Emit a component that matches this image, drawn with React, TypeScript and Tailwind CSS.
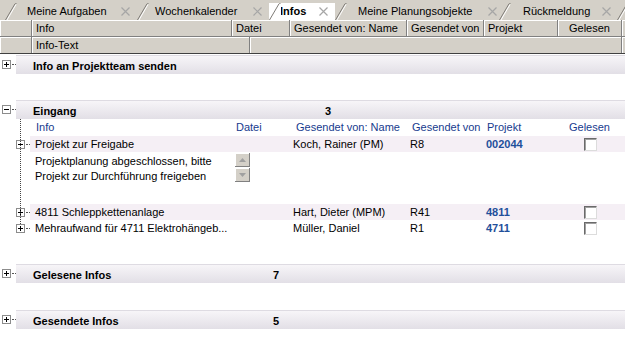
import React from "react";

function XIcon() {
  return (
    <svg width="9" height="9" viewBox="0 0 9 9" className="shrink-0">
      <path d="M0.5 0.5 L8.5 8.5 M8.5 0.5 L0.5 8.5" stroke="#a6a6a6" strokeWidth="1.2" fill="none" />
    </svg>
  );
}

function Diag({ active }: { active?: boolean }) {
  return (
    <svg width="12" height="17" viewBox="0 0 12 17" className="absolute left-0 top-0">
      {active && <polygon points="0.5,17 10.5,0 12,0 12,17" fill="#ffffff" />}
      <path d="M0.5 17 L10 0.8 Q10.6 0 11.5 0 L12 0" stroke="#7e7b76" strokeWidth="1" fill="none" />
      {!active && <path d="M2 17 L11 1.5" stroke="#ffffff" strokeWidth="1" fill="none" />}
    </svg>
  );
}

function Tab({
  w,
  pl,
  pr,
  label,
  active,
}: {
  w: string;
  pl: string;
  pr: string;
  label: string;
  active?: boolean;
}) {
  return (
    <div
      className={`relative flex h-[17px] shrink-0 items-center ${w} ${pl} ${pr} ${
        active ? "bg-white font-bold" : ""
      }`}
    >
      <Diag active={active} />
      <span className="flex-1 whitespace-nowrap leading-none">{label}</span>
      <XIcon />
    </div>
  );
}

function HCell({ w, children, center }: { w: string; children?: React.ReactNode; center?: boolean }) {
  return (
    <div
      className={`flex h-full shrink-0 items-center border-r border-r-[#808080] bg-[#d4d0c8] shadow-[inset_1px_1px_0_#ffffff] ${w} ${
        center ? "justify-center" : "pl-[4px]"
      } whitespace-nowrap`}
    >
      {children}
    </div>
  );
}

function Toggle({ open }: { open?: boolean }) {
  return (
    <div className="flex h-[9px] w-[9px] shrink-0 items-center justify-center border border-[#8c8c8c] bg-white">
      <svg width="7" height="7" viewBox="0 0 7 7">
        <path d="M1 3.5 H6" stroke="#000" strokeWidth="1" />
        {!open && <path d="M3.5 1 V6" stroke="#000" strokeWidth="1" />}
      </svg>
    </div>
  );
}

function Dots() {
  return <div className="ml-[1px] h-0 w-[6px] border-t border-dotted border-[#555]" />;
}

function Group({ title, count, open, countX }: { title: string; count?: string; open?: boolean; countX?: string }) {
  return (
    <div className="flex h-[19px] items-center">
      <div className="flex w-[16px] shrink-0 items-center pl-[2px]">
        <Toggle open={open} />
        <Dots />
      </div>
      <div className="flex h-full flex-1 items-center border-t border-[#dedbe2] bg-gradient-to-b from-[#f7f5f8] to-[#e2dfe6] pt-[3px] font-bold">
        <span className={`pl-[17px] ${countX ?? ""}`}>{title}</span>
        {count && <span>{count}</span>}
      </div>
    </div>
  );
}

function Check() {
  return (
    <div className="h-[13px] w-[13px] border-l border-t border-l-[#6a6a6a] border-t-[#6a6a6a] border-r border-b border-r-[#dcdcdc] border-b-[#dcdcdc] bg-white shadow-[inset_1px_1px_0_#a0a0a0]" />
  );
}

function DataRow({
  info,
  name,
  code,
  proj,
  open,
  shade,
}: {
  info: string;
  name: string;
  code: string;
  proj: string;
  open?: boolean;
  shade?: boolean;
}) {
  return (
    <div className="flex h-[16px] items-center">
      <div className="flex w-[30px] shrink-0 items-center pl-[16px]">
        <Toggle open={open} />
        <Dots />
      </div>
      <div className={`flex h-full flex-1 items-center ${shade ? "bg-[#f5eff5]" : ""}`}>
        <span className="w-[263px] shrink-0 whitespace-nowrap pl-[5px]">{info}</span>
        <span className="w-[117px] shrink-0 whitespace-nowrap">{name}</span>
        <span className="w-[76px] shrink-0">{code}</span>
        <span className="w-[98px] shrink-0 font-bold text-[#1f4f9b]">{proj}</span>
        <Check />
      </div>
    </div>
  );
}

function ScrollBtn({ up }: { up?: boolean }) {
  return (
    <div className="flex h-[14px] w-[15px] items-center justify-center border-r border-b border-r-[#808080] border-b-[#808080] bg-[#d4d0c8] shadow-[inset_1px_1px_0_#ffffff]">
      <svg width="7" height="4" viewBox="0 0 7 4">
        {up ? <polygon points="0,4 3.5,0 7,4" fill="#a0a0a0" /> : <polygon points="0,0 3.5,4 7,0" fill="#a0a0a0" />}
      </svg>
    </div>
  );
}

export default function App() {
  return (
    <div className="h-[340px] w-[625px] overflow-hidden bg-white font-['Liberation_Sans',Arial,sans-serif] text-[11px] text-black">
      {/* Tab bar */}
      <div className="flex h-[20px] items-end bg-[#d4d0c8] pl-[5px]">
        <Tab w="w-[132px]" pl="pl-[22px]" pr="pr-[7px]" label="Meine Aufgaben" />
        <Tab w="w-[132px]" pl="pl-[18px]" pr="pr-[7px]" label="Wochenkalender" />
        <Tab w="w-[66px]" pl="pl-[11px]" pr="pr-[7px]" label="Infos" active />
        <Tab w="w-[164px]" pl="pl-[23px]" pr="pr-[2px]" label="Meine Planungsobjekte" />
        <Tab w="w-[118px]" pl="pl-[24px]" pr="pr-[6px]" label="Rückmeldung" />
        <div className="relative h-[17px] w-[8px] shrink-0">
          <Diag />
        </div>
      </div>

      {/* Header row 1 */}
      <div className="flex h-[17px] border-b border-[#808080]">
        <HCell w="w-[32px]" />
        <HCell w="w-[200px]">Info</HCell>
        <HCell w="w-[58px]">Datei</HCell>
        <HCell w="w-[117px]">Gesendet von: Name</HCell>
        <HCell w="w-[77px]">Gesendet von</HCell>
        <HCell w="w-[74px]">Projekt</HCell>
        <HCell w="w-[64px]" center>
          Gelesen
        </HCell>
        <HCell w="w-[3px]" />
      </div>
      {/* Header row 2 */}
      <div className="flex h-[17px] border-b border-[#404040]">
        <HCell w="w-[32px]" />
        <HCell w="w-[218px]">Info-Text</HCell>
        <HCell w="w-[372px]" />
        <HCell w="w-[3px]" />
      </div>

      {/* Content */}
      <div className="pt-[1px]">
        <Group title="Info an Projektteam senden" />
        <div className="h-[26px]" />
        <Group title="Eingang" count="3" open countX="w-[309px]" />

        <div className="relative">
          <div className="absolute left-[20px] top-0 h-[105px] border-l border-dotted border-[#444]" />
          {/* sub header */}
          <div className="flex h-[16px] items-center text-[#173b8e]">
            <span className="w-[236px] shrink-0 pl-[36px]">Info</span>
            <span className="w-[60px] shrink-0">Datei</span>
            <span className="w-[116px] shrink-0">Gesendet von: Name</span>
            <span className="w-[75px] shrink-0">Gesendet von</span>
            <span className="w-[82px] shrink-0">Projekt</span>
            <span>Gelesen</span>
          </div>
          <div className="h-[1px]" />
          <DataRow info="Projekt zur Freigabe" name="Koch, Rainer (PM)" code="R8" proj="002044" open shade />
          {/* detail */}
          <div className="flex h-[52px] pt-[1px]">
            <div className="w-[235px] shrink-0 whitespace-nowrap pl-[35px] pt-[1px] leading-[15px]">
              <div>Projektplanung abgeschlossen, bitte</div>
              <div>Projekt zur Durchführung freigeben</div>
            </div>
            <div className="flex flex-col gap-[1px]">
              <ScrollBtn up />
              <ScrollBtn />
            </div>
          </div>
          <DataRow info="4811 Schleppkettenanlage" name="Hart, Dieter (MPM)" code="R41" proj="4811" shade />
          <DataRow info="Mehraufwand für 4711 Elektrohängeb..." name="Müller, Daniel" code="R1" proj="4711" />
        </div>

        <div className="h-[28px]" />
        <Group title="Gelesene Infos" count="7" countX="w-[257px]" />
        <div className="h-[27px]" />
        <Group title="Gesendete Infos" count="5" countX="w-[257px]" />
      </div>
    </div>
  );
}
